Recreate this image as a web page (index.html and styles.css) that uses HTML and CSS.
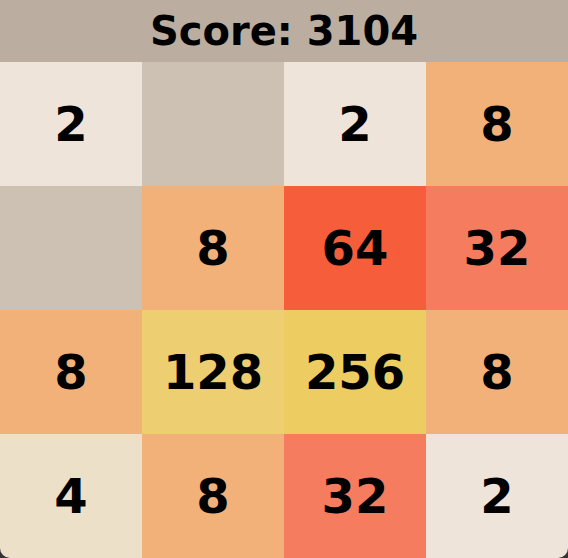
FILE: index.html
```html
<!DOCTYPE html>
<html>
    <head>
        <meta charset="utf-8" />
        <title>2048</title>
        <link rel="stylesheet" href="styles.css">
    </head>
    <body>
        <div class="game">
            <div class="score">Score: 3104</div>
            <div class="board">
                <div class="cell t2">2</div>
                <div class="cell"></div>
                <div class="cell t2">2</div>
                <div class="cell t8">8</div>

                <div class="cell"></div>
                <div class="cell t8">8</div>
                <div class="cell t64">64</div>
                <div class="cell t32">32</div>

                <div class="cell t8">8</div>
                <div class="cell t128">128</div>
                <div class="cell t256">256</div>
                <div class="cell t8">8</div>

                <div class="cell t4">4</div>
                <div class="cell t8">8</div>
                <div class="cell t32">32</div>
                <div class="cell t2">2</div>
            </div>
        </div>
    </body>
</html>
```

FILE: styles.css
```css
body{
    margin:0;
    background:#333;
    font-family:"DejaVu Sans", Verdana, sans-serif;
    font-weight:bold;
}
.game{
    width:568px;
    height:558px;
    overflow:hidden;
    border-radius:0 0 10px 10px;
}
.score{
    height:62px;
    line-height:62px;
    background:#bbada0;
    text-align:center;
    font-size:40px;
}
.board{
    display:grid;
    grid-template-columns:repeat(4, 142px);
    grid-template-rows:repeat(4, 124px);
}
/*空格子*/
.cell{
    background:#cdc1b4;
    display:flex;
    align-items:center;
    justify-content:center;
    font-size:48px;
    color:#000;
}
.t2{ background:#eee4da; }
.t4{ background:#ede0c8; }
.t8{ background:#f2b179; }
.t32{ background:#f67c5f; }
.t64{ background:#f65e3b; }
.t128{ background:#edcf72; }
.t256{ background:#edcc61; }
```
